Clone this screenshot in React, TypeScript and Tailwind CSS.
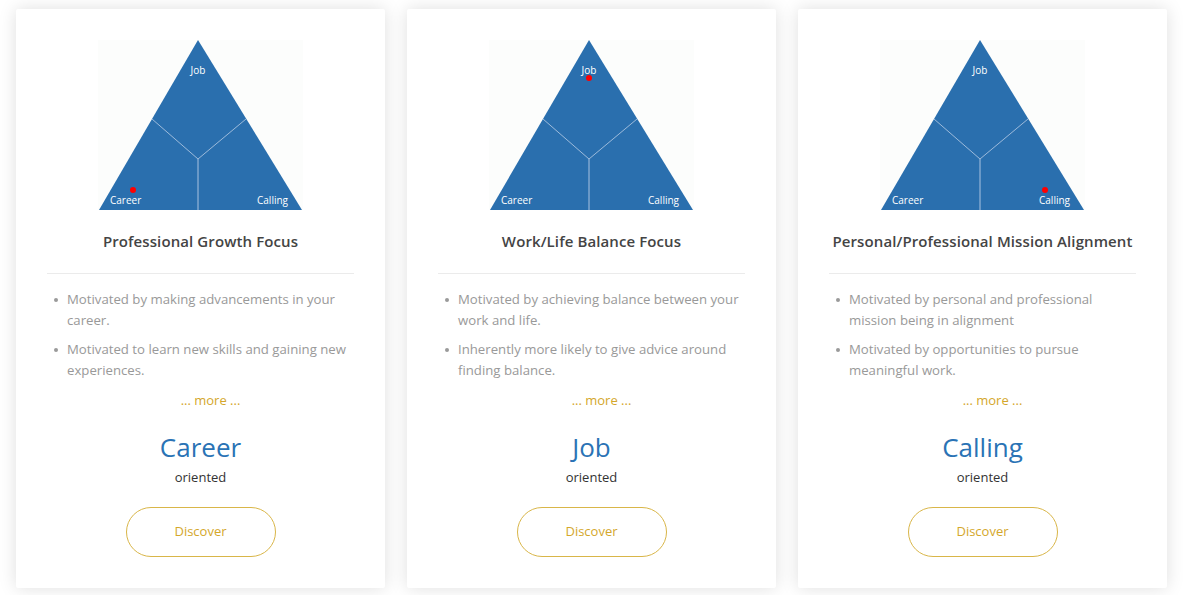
import React from "react";

type Corner = "career" | "job" | "calling";

const cards: {
  title: string;
  bullets: string[];
  label: string;
  dot: Corner;
}[] = [
  {
    title: "Professional Growth Focus",
    bullets: [
      "Motivated by making advancements in your career.",
      "Motivated to learn new skills and gaining new experiences.",
    ],
    label: "Career",
    dot: "career",
  },
  {
    title: "Work/Life Balance Focus",
    bullets: [
      "Motivated by achieving balance between your work and life.",
      "Inherently more likely to give advice around finding balance.",
    ],
    label: "Job",
    dot: "job",
  },
  {
    title: "Personal/Professional Mission Alignment",
    bullets: [
      "Motivated by personal and professional mission being in alignment",
      "Motivated by opportunities to pursue meaningful work.",
    ],
    label: "Calling",
    dot: "calling",
  },
];

const dotPos: Record<Corner, { x: number; y: number }> = {
  career: { x: 35, y: 150 },
  job: { x: 100, y: 38 },
  calling: { x: 165, y: 150 },
};

function Triangle({ dot }: { dot: Corner }) {
  const d = dotPos[dot];
  return (
    <svg width="205" height="170" viewBox="0 0 205 170" className="block bg-[#fcfdfc]">
      <polygon points="100,0 1,170 204,170" fill="#2a6fae" />
      <polyline points="54,79 100,119 148,79" fill="none" stroke="#a9c3e0" strokeWidth="0.9" />
      <line x1="100" y1="119" x2="100" y2="170" stroke="#a9c3e0" strokeWidth="1" />
      <g fill="#ffffff" fontFamily="'Open Sans', sans-serif" fontSize="10">
        <text x="100" y="34" textAnchor="middle">Job</text>
        <text x="12" y="164">Career</text>
        <text x="190" y="164" textAnchor="end">Calling</text>
      </g>
      <circle cx={d.x} cy={d.y} r="3" fill="#ff0000" />
    </svg>
  );
}

export default function App() {
  return (
    <div className="min-h-screen bg-white px-4 pt-[9px] pb-2 font-['Open_Sans',sans-serif]">
      <div className="grid grid-cols-3 gap-[22px]">
        {cards.map((c) => (
          <div
            key={c.title}
            className="bg-white rounded-[2px] shadow-[0_0_18px_rgba(0,0,0,0.13)] px-[31px] pt-[31px] pb-[31px] flex flex-col items-center"
          >
            <Triangle dot={c.dot} />
            <h3 className="mt-[21px] h-5 leading-5 text-[15px] font-semibold text-[#444] tracking-[0.1px] whitespace-nowrap">
              {c.title}
            </h3>
            <div className="w-full h-px bg-[#ebebeb] mt-[22px]" />
            <ul className="w-full mt-[15px] flex flex-col gap-2">
              {c.bullets.map((b) => (
                <li key={b} className="flex text-[13.2px] leading-[21px] text-[#999]">
                  <span className="w-5 shrink-0 flex justify-center pt-[9px] pr-[2px]">
                    <span className="w-1 h-1 rounded-full bg-[#9a9a9a]" />
                  </span>
                  <span>{b}</span>
                </li>
              ))}
            </ul>
            <div className="w-full pl-5 mt-[9px] flex justify-center">
              <a className="text-[13px] leading-[21px] text-[#d4a72c]">... more ...</a>
            </div>
            <div className="mt-5 text-[26px] leading-8 text-[#2a73b5]">{c.label}</div>
            <div className="mt-[4px] text-[13px] leading-5 text-[#333]">oriented</div>
            <button className="mt-5 w-[150px] h-[50px] rounded-full border border-[#d9b649] text-[13px] text-[#d4a72c]">
              Discover
            </button>
          </div>
        ))}
      </div>
    </div>
  );
}
